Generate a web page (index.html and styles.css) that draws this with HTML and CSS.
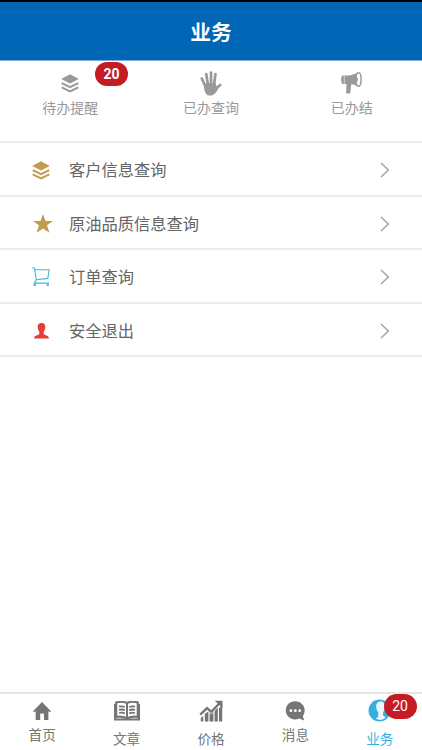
FILE: index.html
```html
<!DOCTYPE html>
<html lang="zh-CN">
<head>
<meta charset="utf-8">
<title>业务</title>
<link rel="stylesheet" href="styles.css">
</head>
<body>
<svg class="defs" width="0" height="0">
  <symbol id="layers" viewBox="0 0 18 19">
    <path d="M9 0.3 17.8 4.9 9 9.5 0.2 4.9Z" fill="currentColor"/>
    <path d="M.7 9.1 9 13.2 17.3 9.1M.7 13.4 9 17.5 17.3 13.4" fill="none" stroke="currentColor" stroke-width="2"/>
  </symbol>
  <symbol id="chevron" viewBox="0 0 10 16">
    <path d="M1 1 8.3 8 1 15" fill="none" stroke="currentColor" stroke-width="1.5"/>
  </symbol>
</svg>
<div class="app">
  <header class="header"><h1>业务</h1></header>
  <nav class="tabs">
    <a class="tab">
      <span class="tab-icon"><svg width="18" height="19"><use href="#layers"/></svg></span>
      <span>待办提醒</span>
      <b class="badge badge-top">20</b>
    </a>
    <a class="tab">
      <span class="tab-icon"><svg width="22" height="25" viewBox="0 0 22 25">
        <path d="M5.2 15 1.8 7.5M8 14 6.2 3M11 14V1.6M14 14 15.4 3.2M14.8 18.5 20.2 14" fill="none" stroke="currentColor" stroke-width="2.7" stroke-linecap="round"/>
        <path d="M4 12.5 15.5 12 16.3 15.2 18 14.8 18.8 16.4C16.8 20.4 14.5 24.6 10 24.6 5.8 24.6 4.7 20.5 4 17Z" fill="currentColor"/>
      </svg></span>
      <span>已办查询</span>
    </a>
    <a class="tab">
      <span class="tab-icon"><svg width="21" height="22" viewBox="0 0 21 22">
        <path d="M2 3.4H8C11.5 3.4 14 1.6 17 .5V14.5C14.2 13 12 12 8.6 12H2C.6 12 .2 10 .2 7.7S.6 3.4 2 3.4Z" fill="currentColor"/>
        <path d="M5.5 11H10.4L9.2 21.5H5.2Z" fill="currentColor"/>
        <ellipse cx="17.5" cy="7.5" rx="2.6" ry="6.7" fill="#fff" stroke="currentColor" stroke-width="1.5"/>
        <path d="M15 5C17.6 5.1 17.6 9.9 15 10Z" fill="currentColor"/>
        <path d="M3.3 4V11.4" stroke="#fff" stroke-width=".6"/>
      </svg></span>
      <span>已办结</span>
    </a>
  </nav>
  <main class="list">
    <a class="row"><span class="row-icon gold"><svg width="18" height="19"><use href="#layers"/></svg></span><span class="label">客户信息查询</span><svg class="chevron" width="10" height="16"><use href="#chevron"/></svg></a>
    <a class="row"><span class="row-icon gold star"><svg width="20" height="19" viewBox="0 0 20 19"><path d="M10 0 12.5 6.9H20L14 11.3 16.4 18.8 10 14.4 3.6 18.8 6 11.3 0 6.9H7.5Z" fill="currentColor"/></svg></span><span class="label">原油品质信息查询</span><svg class="chevron" width="10" height="16"><use href="#chevron"/></svg></a>
    <a class="row"><span class="row-icon blue"><svg width="18" height="20" viewBox="0 0 18 20"><path d="M0 1H2.4L4.3 12.9 2.3 16.1H17M3 2.7H17.2L15.8 11.4 4.2 12.7M2.5 16V17.5M16 16V17.5" fill="none" stroke="currentColor" stroke-width="1.1"/><circle cx="2.8" cy="18" r="1.2" fill="currentColor"/><circle cx="15.8" cy="18" r="1.2" fill="currentColor"/></svg></span><span class="label">订单查询</span><svg class="chevron" width="10" height="16"><use href="#chevron"/></svg></a>
    <a class="row"><span class="row-icon red"><svg width="15" height="16" viewBox="0 0 15 16"><path d="M7.5 0C10.3 0 11.5 1.7 11.3 4.3 11.2 6.5 10.4 8 9.6 8.9V11.1C10.6 12.4 14.9 12.3 14.9 15.6H.1C.1 12.3 4.4 12.4 5.4 11.1V8.9C4.6 8 3.8 6.5 3.7 4.3 3.5 1.7 4.7 0 7.5 0Z" fill="currentColor"/></svg></span><span class="label">安全退出</span><svg class="chevron" width="10" height="16"><use href="#chevron"/></svg></a>
  </main>
  <footer class="bottom">
    <a class="item"><span class="item-icon"><svg width="18" height="18" viewBox="0 0 18 18"><path d="M9 0 18 9.2 16.8 10.3 15.4 9V18H11V11.5H7.2V18H2.7V9L1.2 10.3 0 9.2Z" fill="currentColor"/></svg></span><span>首页</span></a>
    <a class="item low"><span class="item-icon"><svg width="26" height="20" viewBox="0 0 26 20"><path d="M2.2 1.5Q8-.2 13 2 18-.2 23.8 1.5V16Q18 14.8 13 17.4 8 14.8 2.2 16Z" fill="#fff" stroke="currentColor" stroke-width="2.2"/><path d="M1 3V18.5H25V3M13 2V18" fill="none" stroke="currentColor" stroke-width="2"/><path d="M5 5.6Q8 4.8 10.8 6M5 8.8Q8 8 10.8 9.2M5 12Q8 11.2 10.8 12.4M21 5.6Q18 4.8 15.2 6M21 8.8Q18 8 15.2 9.2M21 12Q18 11.2 15.2 12.4" fill="none" stroke="currentColor" stroke-width="1.8"/></svg></span><span>文章</span></a>
    <a class="item low"><span class="item-icon"><svg width="24" height="22" viewBox="0 0 24 22"><path d="M1.8 18 4.2 16V21.5H1.8ZM5.8 14 9.4 11.2V21.5H5.8ZM10.6 12.7 12.4 14.2 14.4 12V21.5H10.6ZM15.6 11.3 18.8 7.5V21.5H15.6ZM20 8.2 23.2 5V21.5H20Z" fill="currentColor"/><path d="M1.2 14.6 8.1 8.1 12.3 11.8 20 3.8" fill="none" stroke="currentColor" stroke-width="2.3"/><path d="M15.8.8H23.5V8.2Z" fill="currentColor"/></svg></span><span>价格</span></a>
    <a class="item"><span class="item-icon"><svg width="20" height="20" viewBox="0 0 20 20"><path d="M10.2.2C15.5.2 19.7 4.2 19.7 9.2 19.7 12 18.5 14 17.8 15.1L19.2 19.5 14.1 17.6C12.8 18.2 11.5 18.4 10.2 18.4 4.8 18.4.8 14.5.8 9.3S4.8.2 10.2.2Z" fill="currentColor"/><g fill="#fff"><circle cx="5.9" cy="9.7" r="1.4"/><circle cx="10.3" cy="9.7" r="1.4"/><circle cx="14.7" cy="9.7" r="1.4"/></g></svg></span><span>消息</span></a>
    <a class="item low active"><span class="item-icon"><svg width="23" height="23" viewBox="0 0 23 23"><circle cx="11.5" cy="11.5" r="11" fill="currentColor"/><path d="M12.5 2.4C15.8 2.4 17.2 5 16.9 8.3 16.7 11 15.8 12.5 15 13.5V16.5L17.5 18.3C15.5 21.2 10.5 21.6 8 19.8L10.3 17.5V13.5C9.2 12.2 8.4 10.5 8.2 8.3 8 4.8 9.2 2.4 12.5 2.4Z" fill="#e9f7fc"/></svg></span><span>业务</span><b class="badge badge-bottom">20</b></a>
  </footer>
</div>
</body>
</html>
```
FILE: styles.css
```css
* { box-sizing: border-box; }
body { margin: 0; background: #fff; font-family: Roboto, "Noto Sans CJK SC", sans-serif; }
svg { display: block; flex: none; }
.defs { position: absolute; }
.app { width: 422px; height: 750px; display: flex; flex-direction: column; overflow: hidden; }
.header { height: 61px; flex: none; border-top: 2px solid #000; border-bottom: 1px solid #7eaedb; background: #0066b5; display: flex; justify-content: center; align-items: center; }
.header h1 { margin: 0; color: #fff; font-size: 20.7px; line-height: 30px; font-weight: 700; padding-top: 3px; }
.tabs { height: 80px; flex: none; display: grid; grid-template-columns: repeat(3, 1fr); color: #999; }
.tab { position: relative; display: flex; flex-direction: column; align-items: center; font-size: 14px; line-height: 20px; }
.tab-icon { height: 37px; display: flex; align-items: center; padding-top: 7px; }
.badge { position: absolute; background: #c51c23; color: #fff; font-size: 14px; text-align: center; border-radius: 13px; }
.badge-top { left: 95px; top: 1px; width: 33px; height: 24px; line-height: 25px; font-weight: 700; }
.badge-bottom { left: 46px; top: 0; width: 33px; height: 25px; line-height: 25px; font-weight: 400; }
.list { flex: 1; }
.row { height: 53.6px; border-top: 2px solid #ececec; display: flex; align-items: center; padding: 3px 32px 0 28px; font-size: 16.25px; color: #666; }
.row:last-child { height: 55.6px; border-bottom: 2px solid #ececec; }
.row-icon { width: 26px; height: 20px; margin-right: 15px; display: flex; justify-content: center; align-items: center; }
.star { padding-left: 4px; }
.label { flex: 1; line-height: 24px; padding-top: 2px; }
.chevron { color: #a5a5a5; }
.gold { color: #c39a4f; }
.blue { color: #4bb4e0; }
.red { color: #e53c35; }
.bottom { height: 58px; flex: none; border-top: 2px solid #e6e6e6; display: grid; grid-template-columns: repeat(5, 1fr); color: #757575; }
.item { position: relative; display: flex; flex-direction: column; align-items: center; font-size: 13.6px; line-height: 20px; }
.item-icon { height: 31px; display: flex; align-items: center; padding-top: 2px; }
.low .item-icon { height: 35px; padding: 0 0 2px; }
.active { color: #39b0dc; }
```
